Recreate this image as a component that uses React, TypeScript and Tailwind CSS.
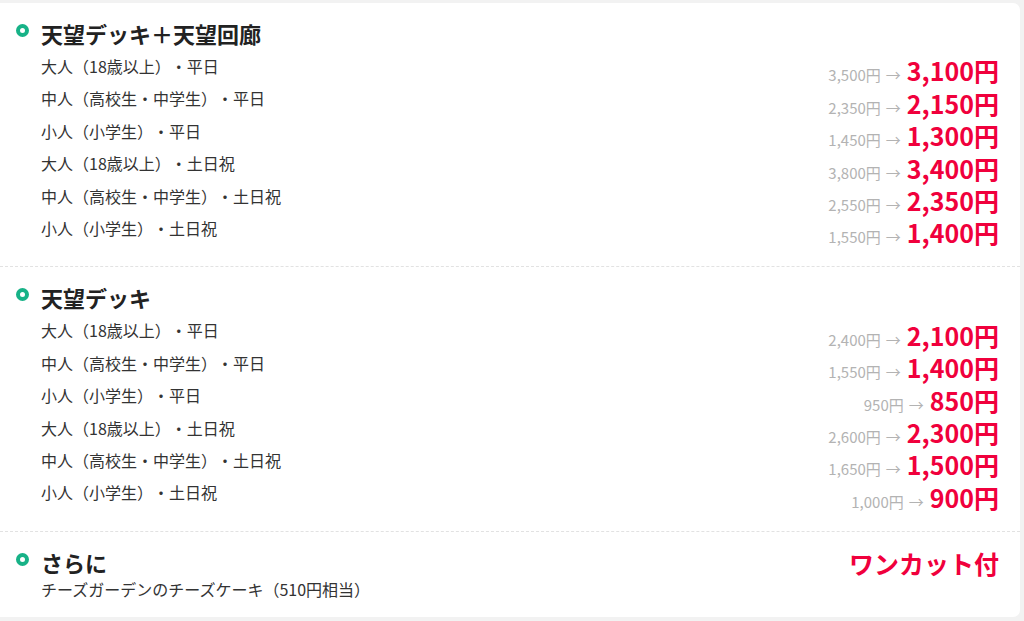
const sections = [
  {
    title: '天望デッキ＋天望回廊',
    rows: [
      { label: '大人（18歳以上）・平日', before: '3,500円', after: '3,100円' },
      { label: '中人（高校生・中学生）・平日', before: '2,350円', after: '2,150円' },
      { label: '小人（小学生）・平日', before: '1,450円', after: '1,300円' },
      { label: '大人（18歳以上）・土日祝', before: '3,800円', after: '3,400円' },
      { label: '中人（高校生・中学生）・土日祝', before: '2,550円', after: '2,350円' },
      { label: '小人（小学生）・土日祝', before: '1,550円', after: '1,400円' },
    ],
  },
  {
    title: '天望デッキ',
    rows: [
      { label: '大人（18歳以上）・平日', before: '2,400円', after: '2,100円' },
      { label: '中人（高校生・中学生）・平日', before: '1,550円', after: '1,400円' },
      { label: '小人（小学生）・平日', before: '950円', after: '850円' },
      { label: '大人（18歳以上）・土日祝', before: '2,600円', after: '2,300円' },
      { label: '中人（高校生・中学生）・土日祝', before: '1,650円', after: '1,500円' },
      { label: '小人（小学生）・土日祝', before: '1,000円', after: '900円' },
    ],
  },
]

function Dot() {
  return <span className="w-[13px] h-[13px] mb-[5px] rounded-full border-[4.5px] border-[#17b287] bg-white flex-shrink-0" />
}

function Title({ children }: { children: React.ReactNode }) {
  return (
    <div className="flex items-center gap-[12px]">
      <Dot />
      <h2 className="text-[22px] leading-[28px] font-bold text-[#222]">{children}</h2>
    </div>
  )
}

export default function App() {
  return (
    <div
      className="w-[1024px] h-[621px] bg-[#f2f2f2] pt-[3px] pr-[4px] pb-[4px] overflow-hidden [text-spacing-trim:space-all]"
      style={{ fontFamily: '"Noto Sans CJK JP", "Noto Sans", sans-serif' }}
    >
      <div className="h-full bg-white rounded-r-[7px] flex flex-col">
        {sections.map((section) => (
          <div key={section.title} className="pl-[16px] pr-[21px] pt-[16px] pb-[18px] border-b border-dashed border-[#e2e2e2]">
            <Title>{section.title}</Title>
            <div className="mt-[7px] pl-[25px]">
              {section.rows.map((row) => (
                <div key={row.label} className="h-[32.4px] flex justify-between">
                  <span className="self-start text-[16px] leading-[24px] text-[#333]">{row.label}</span>
                  <span className="self-end flex items-baseline leading-[22px]">
                    <span className="text-[15px] text-[#b3b3b3]">{row.before}</span>
                    <span className="text-[15px] text-[#b3b3b3] ml-[5px]">→</span>
                    <span className="text-[25px] font-bold text-[#f0003c] ml-[6px]">{row.after}</span>
                  </span>
                </div>
              ))}
            </div>
          </div>
        ))}

        {/* Bonus */}
        <div className="pl-[16px] pr-[21px] pt-[16px]">
          <div className="flex justify-between items-start">
            <Title>さらに</Title>
            <span className="text-[25px] leading-[30px] font-bold text-[#f0003c]">ワンカット付</span>
          </div>
          <p className="pl-[25px] text-[16px] leading-[26px] text-[#333] -mt-[2px]">
            チーズガーデンのチーズケーキ（510円相当）
          </p>
        </div>
      </div>
    </div>
  )
}
